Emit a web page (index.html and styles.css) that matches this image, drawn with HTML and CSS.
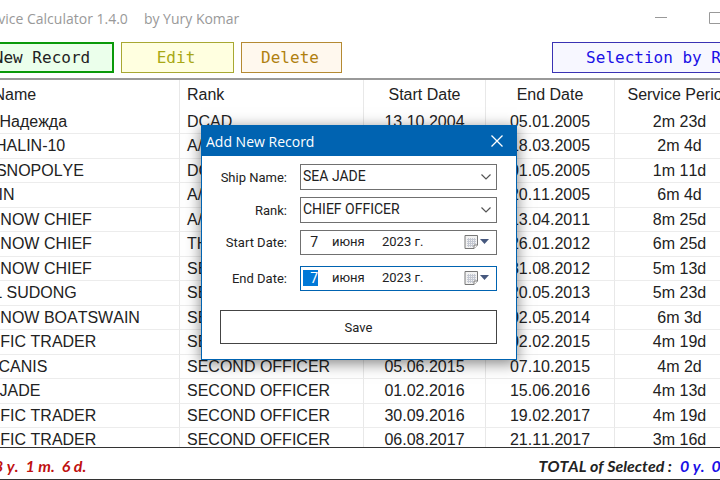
FILE: index.html
```html
<!DOCTYPE html>
<html lang="en">

<head>
  <meta charset="UTF-8">
  <meta name="viewport" content="width=device-width, initial-scale=1.0">
  <title>Service Calculator</title>
  <link rel="stylesheet" href="styles.css">
</head>

<body>
  <div class="window">
    <header class="titlebar">
      <span class="app-name">Service Calculator 1.4.0</span>
      <span class="author">by Yury Komar</span>
      <div class="window-buttons">
        <button aria-label="Minimize"><svg width="12" height="12"><path d="M0 5.500h12"/></svg></button>
        <button aria-label="Maximize"><svg width="12" height="12"><path d="M.5 .5h11v11h-11z"/></svg></button>
        <button aria-label="Close"><svg width="12" height="12"><path d="M0 0l12 12M12 0L0 12"/></svg></button>
      </div>
    </header>

    <nav class="toolbar">
      <button class="btn btn-new">New Record</button>
      <button class="btn btn-edit">Edit</button>
      <button class="btn btn-delete">Delete</button>
      <button class="btn btn-select">Selection by Rank</button>
    </nav>

    <main class="records">
      <table>
        <colgroup>
          <col class="col-name">
          <col class="col-rank">
          <col class="col-start">
          <col class="col-end">
          <col>
        </colgroup>
        <thead>
          <tr><th>Ship Name</th><th>Rank</th><th>Start Date</th><th>End Date</th><th>Service Period</th></tr>
        </thead>
        <tbody>
          <tr><td>СРТ Надежда</td><td>DCAD</td><td>13.10.2004</td><td>05.01.2005</td><td>2m 23d</td></tr>
          <tr><td>SAKHALIN-10</td><td>A/B</td><td>15.01.2005</td><td>18.03.2005</td><td>2m 4d</td></tr>
          <tr><td>KRASNOPOLYE</td><td>DCAD</td><td>21.03.2005</td><td>01.05.2005</td><td>1m 11d</td></tr>
          <tr><td>MARIN</td><td>A/B</td><td>17.05.2005</td><td>20.11.2005</td><td>6m 4d</td></tr>
          <tr><td>WARNOW CHIEF</td><td>A/B</td><td>20.07.2010</td><td>13.04.2011</td><td>8m 25d</td></tr>
          <tr><td>WARNOW CHIEF</td><td>THIRD OFFICER</td><td>02.07.2011</td><td>26.01.2012</td><td>6m 25d</td></tr>
          <tr><td>WARNOW CHIEF</td><td>SECOND OFFICER</td><td>19.03.2012</td><td>31.08.2012</td><td>5m 13d</td></tr>
          <tr><td>BELL SUDONG</td><td>SECOND OFFICER</td><td>28.11.2012</td><td>20.05.2013</td><td>5m 23d</td></tr>
          <tr><td>WARNOW BOATSWAIN</td><td>SECOND OFFICER</td><td>30.10.2013</td><td>02.05.2014</td><td>6m 3d</td></tr>
          <tr><td>PACIFIC TRADER</td><td>SECOND OFFICER</td><td>15.09.2014</td><td>02.02.2015</td><td>4m 19d</td></tr>
          <tr><td>MERCANIS</td><td>SECOND OFFICER</td><td>05.06.2015</td><td>07.10.2015</td><td>4m 2d</td></tr>
          <tr><td>SEA JADE</td><td>SECOND OFFICER</td><td>01.02.2016</td><td>15.06.2016</td><td>4m 13d</td></tr>
          <tr><td>PACIFIC TRADER</td><td>SECOND OFFICER</td><td>30.09.2016</td><td>19.02.2017</td><td>4m 19d</td></tr>
          <tr><td>PACIFIC TRADER</td><td>SECOND OFFICER</td><td>06.08.2017</td><td>21.11.2017</td><td>3m 16d</td></tr>
        </tbody>
      </table>
    </main>

    <footer class="totals">
      <span class="total-all">8 y.&nbsp; 1 m.&nbsp; 6 d.</span>
      <span class="total-label">TOTAL of Selected :</span>
      <span class="total-selected">0 y.&nbsp; 0 m.&nbsp; 0 d.</span>
    </footer>
  </div>

  <form class="dialog" role="dialog" aria-labelledby="dialogTitle">
    <div class="dialog-title">
      <span id="dialogTitle">Add New Record</span>
      <button type="button" aria-label="Close"><svg width="12" height="12"><path d="M.5 .5l11 11M11.5 .5l-11 11"/></svg></button>
    </div>
    <div class="dialog-body">
      <div class="field">
        <label for="shipName">Ship Name:</label>
        <div class="combo">
          <select id="shipName"><option>SEA JADE</option></select>
          <svg width="10" height="6"><path d="M.5 .5L5 5L9.5 .5"/></svg>
        </div>
      </div>
      <div class="field">
        <label for="rank">Rank:</label>
        <div class="combo">
          <select id="rank"><option>CHIEF OFFICER</option></select>
          <svg width="10" height="6"><path d="M.5 .5L5 5L9.5 .5"/></svg>
        </div>
      </div>
      <div class="field field-date">
        <label for="startDay">Start Date:</label>
        <div class="date">
          <input class="day" id="startDay" value="7">
          <input class="month" aria-label="Start month" value="июня">
          <input class="year" aria-label="Start year" value="2023 г.">
          <button type="button" aria-label="Open start calendar">
            <svg width="26" height="16">
              <path class="sheet" d="M1 1.500h12.500v9.500l-3.500 3.500H1z"/>
              <path class="sheet-grid" d="M3 5.500h9M3 7.500h9M3 9.500h9M3 11.500h6M4.500 4v9M6.500 4v9M8.500 4v9M10.500 4v6"/>
              <path class="sheet-fold" d="M10 14.500V11h3.500"/>
              <path class="arrow" d="M16 5h9l-4.500 5z"/>
            </svg>
          </button>
        </div>
      </div>
      <div class="field field-date">
        <label for="endDay">End Date:</label>
        <div class="date active">
          <input class="day" id="endDay" value="7">
          <input class="month" aria-label="End month" value="июня">
          <input class="year" aria-label="End year" value="2023 г.">
          <button type="button" aria-label="Open end calendar">
            <svg width="26" height="16">
              <path class="sheet" d="M1 1.500h12.500v9.500l-3.500 3.500H1z"/>
              <path class="sheet-grid" d="M3 5.500h9M3 7.500h9M3 9.500h9M3 11.500h6M4.500 4v9M6.500 4v9M8.500 4v9M10.500 4v6"/>
              <path class="sheet-fold" d="M10 14.500V11h3.500"/>
              <path class="arrow" d="M16 5h9l-4.500 5z"/>
            </svg>
          </button>
        </div>
      </div>
      <button type="button" class="save">Save</button>
    </div>
  </form>
</body>

</html>
```
FILE: styles.css
```css
* {
  box-sizing: border-box;
}

html, body {
  height: 100%;
  margin: 0;
  overflow: hidden;
  background-color: #fff;
}

button, input, select {
  margin: 0;
  padding: 0;
  border: none;
  border-radius: 0;
  background: none;
  font: inherit;
  color: inherit;
}

svg {
  display: block;
  fill: none;
}

/* the main window is wider than the screen on both sides */
.window {
  display: flex;
  flex-direction: column;
  height: 100%;
  margin: 0 -76px 0 -46px;
  border-bottom: 1px solid #333;
  font-family: "Liberation Sans", Arial, sans-serif;
  font-size: 16px;
  font-kerning: none;
  color: #222;
}

.titlebar {
  display: flex;
  align-items: center;
  gap: 16px;
  height: 36px;
  padding-left: 23px;
  font-family: "Open Sans", sans-serif;
  font-size: 14px;
  color: #999;
}

.window-buttons {
  display: flex;
  margin-left: auto;
}

.window-buttons button {
  display: flex;
  justify-content: center;
  width: 54px;
}

.window-buttons svg {
  stroke: #999;
}

.toolbar {
  display: flex;
  gap: 7px;
  padding: 6px 12px 5px 16px;
  border-bottom: 2px solid #999;
}

.btn {
  height: 31px;
  border: 1px solid;
  font-family: "DejaVu Sans Mono", monospace;
}

.btn-new {
  width: 144px;
  border: 2px solid #0a9a0a;
  background-color: #ebffeb;
  color: #222;
}

.btn-edit {
  width: 113px;
  padding-right: 3px;
  border-color: #a8a832;
  background-color: #ffffe0;
  color: #a8a814;
}

.btn-delete {
  width: 101px;
  padding-right: 3px;
  border-color: #b58a32;
  background-color: #fff8ee;
  color: #b08010;
}

.btn-select {
  width: 232px;
  margin-left: auto;
  border-color: #3a32b4;
  background-color: #f7f7ff;
  color: #1a10e6;
}

.records {
  flex: 1;
  min-height: 0;
  overflow: hidden;
  padding-right: 51px;
}

table {
  width: 100%;
  border-collapse: separate;
  border-spacing: 0;
  table-layout: fixed;
}

.col-name {
  width: 226px;
}

.col-rank {
  width: 184px;
}

.col-start {
  width: 122px;
}

.col-end {
  width: 129px;
}

th, td {
  padding: 0 7px;
  border-right: 1px solid #e8e8e8;
  font-weight: normal;
  line-height: 20px;
  text-align: center;
  white-space: nowrap;
}

th {
  height: 30px;
}

th:first-child {
  padding-left: 3px;
}

td {
  height: 24px;
  border-bottom: 1px solid #ececec;
}

td:first-child {
  padding-left: 9px;
}

tr:nth-child(even) td {
  height: 25px;
}

th:nth-child(-n+2),
td:nth-child(-n+2) {
  text-align: left;
}

.totals {
  display: flex;
  align-items: center;
  height: 32px;
  padding: 4px 12px 0 40px;
  border-top: 1px solid #333;
  font-family: Lato, sans-serif;
  font-size: 16px;
  font-weight: bold;
  font-style: italic;
}

.total-all {
  color: #c01010;
}

.total-label {
  margin-left: auto;
}

.total-selected {
  width: 104px;
  margin-left: 8px;
  color: #1a10e6;
  white-space: nowrap;
}

.dialog {
  position: absolute;
  left: 201px;
  top: 125px;
  width: 316px;
  border: 1px solid #0063b1;
  background-color: #fff;
  box-shadow: 0 3px 14px rgba(0, 0, 0, 0.5);
  font-family: Roboto, sans-serif;
  font-size: 13px;
  color: #222;
}

.dialog-title {
  display: flex;
  align-items: center;
  justify-content: space-between;
  height: 30px;
  padding: 0 13px 0 4px;
  background-color: #0063b1;
  font-family: "Open Sans", sans-serif;
  font-size: 14px;
  color: #fff;
}

.dialog-title svg {
  stroke: #fff;
  stroke-width: 1.3;
}

.dialog-body {
  display: flex;
  flex-direction: column;
  padding: 8px 19px 15px 18px;
}

.field {
  display: flex;
  align-items: center;
  gap: 13px;
  margin-bottom: 7px;
}

.field-date {
  margin-bottom: 11px;
}

.field label {
  flex: 1;
  text-align: right;
}

.combo {
  position: relative;
  width: 197px;
  height: 26px;
}

.combo select {
  width: 100%;
  height: 100%;
  padding: 0 20px 2px 2px;
  border: 1px solid #707070;
  appearance: none;
  font-size: 14px;
}

.combo svg {
  position: absolute;
  right: 6px;
  top: 10px;
  stroke: #555;
  stroke-width: 1.2;
}

.date {
  display: flex;
  align-items: center;
  width: 197px;
  height: 25px;
  padding: 0 6px 2px 2px;
  border: 1px solid #707070;
}

.date input {
  height: 16px;
}

.date .day {
  width: 15px;
  text-align: right;
  font-size: 14px;
}

.date .month {
  width: 34px;
  margin-left: 14px;
}

.date .year {
  width: 50px;
  margin-left: 16px;
}

.date button {
  margin-left: auto;
}

.date.active {
  border-color: #0063b1;
}

.active .day {
  background-color: #0078d7;
  color: #fff;
}

.sheet {
  fill: #f2f2f2;
  stroke: #777;
}

.sheet-grid {
  stroke: #c4c8d2;
}

.sheet-fold {
  fill: #fff;
  stroke: #777;
}

.arrow {
  fill: #46587e;
}

.save {
  height: 34px;
  margin-top: 8px;
  border: 1px solid #444;
}
```
